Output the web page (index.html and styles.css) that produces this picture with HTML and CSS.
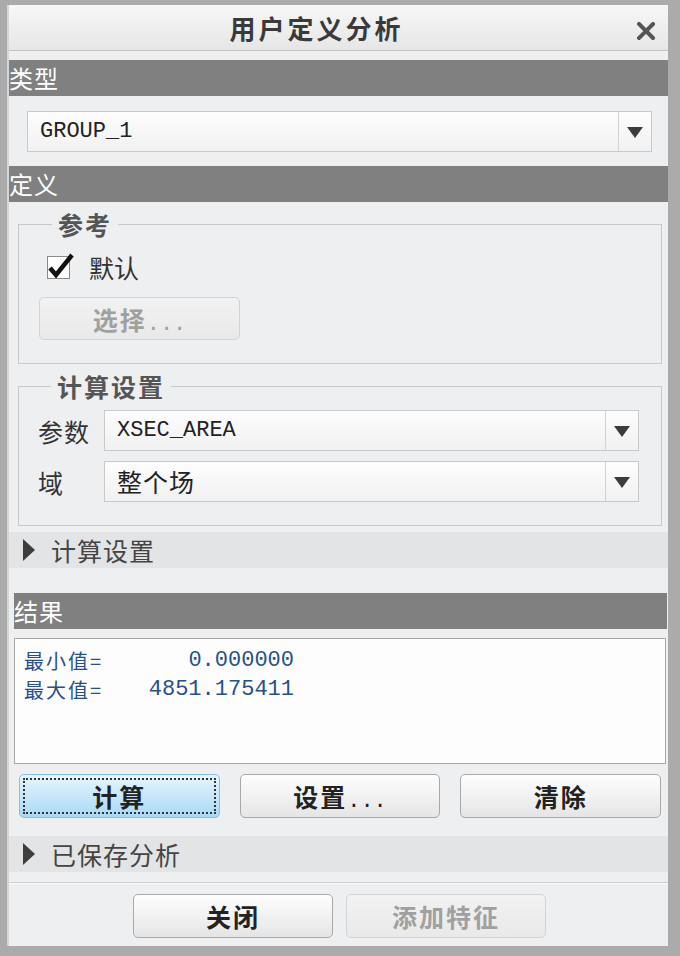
FILE: index.html
```html
<!DOCTYPE html>
<html lang="zh-CN">
<head>
    <meta charset="UTF-8">
    <meta name="viewport" content="width=device-width, initial-scale=1.0">
    <title>用户定义分析</title>
    <link rel="stylesheet" href="styles.css">
</head>
<body>
    <div class="dialog">
        <header class="title-bar">
            <h1>用户定义分析</h1>
            <svg class="close-icon" width="18" height="18" viewBox="0 0 18 18">
                <path d="M2 2 L16 16 M16 2 L2 16" stroke="#555" stroke-width="4" stroke-linecap="square"/>
            </svg>
        </header>

        <div class="section-bar">类型</div>
        <div class="combo combo-type">
            <div class="combo-value mono">GROUP_1</div>
            <div class="combo-arrow"><span class="arrow"></span></div>
        </div>

        <div class="section-bar">定义</div>

        <fieldset class="group group-ref">
            <legend>参考</legend>
            <label class="check-row">
                <svg class="checkbox" width="30" height="30" viewBox="0 0 30 30">
                    <rect x="1.5" y="7.5" width="22" height="22" fill="#fff" stroke="#8a8a8a"/>
                    <path d="M4 19 L10 26 L26 6" fill="none" stroke="#111" stroke-width="4.5"/>
                </svg>
                <span>默认</span>
            </label>
            <button class="btn btn-select" disabled>选择<span class="mono">...</span></button>
        </fieldset>

        <fieldset class="group group-calc">
            <legend>计算设置</legend>
            <div class="field-row">
                <span class="field-label">参数</span>
                <div class="combo">
                    <div class="combo-value mono">XSEC_AREA</div>
                    <div class="combo-arrow"><span class="arrow"></span></div>
                </div>
            </div>
            <div class="field-row">
                <span class="field-label">域</span>
                <div class="combo">
                    <div class="combo-value">整个场</div>
                    <div class="combo-arrow"><span class="arrow"></span></div>
                </div>
            </div>
        </fieldset>

        <div class="expander expander-calc"><span class="tri"></span>计算设置</div>

        <div class="section-bar section-result">结果</div>
        <div class="result-box">
            <div class="result-line"><span>最小值=</span><span class="mono">0.000000</span></div>
            <div class="result-line"><span>最大值=</span><span class="mono">4851.175411</span></div>
        </div>

        <div class="action-row">
            <button class="btn btn-focus">计算</button>
            <button class="btn">设置<span class="mono">...</span></button>
            <button class="btn">清除</button>
        </div>

        <div class="expander expander-saved"><span class="tri"></span>已保存分析</div>

        <footer class="dialog-footer">
            <button class="btn">关闭</button>
            <button class="btn" disabled>添加特征</button>
        </footer>
    </div>
</body>
</html>
```

FILE: styles.css
```css
* {
    margin: 0;
    padding: 0;
    box-sizing: border-box;
}

body {
    background-color: #ababab;
    font-family: "Noto Sans CJK SC", "Liberation Sans", sans-serif;
    color: #333;
}

.mono {
    font-family: "Liberation Mono", "Noto Sans CJK SC", monospace;
}

.dialog {
    margin: 5px 12px 0 7px;
    height: 941px;
    background-color: #eeeff0;
    border-left: 2px solid #d6d6d6;
    display: flex;
    flex-direction: column;
}

.title-bar {
    height: 46px;
    display: flex;
    align-items: center;
    justify-content: center;
    position: relative;
    background: linear-gradient(#f7f7f7, #e6e6e6);
    border-bottom: 1px solid #c4c4c4;
}

.title-bar h1 {
    font-size: 26px;
    font-weight: bold;
    letter-spacing: 3px;
    color: #3a3a3a;
    margin-right: 44px;
}

.close-icon {
    position: absolute;
    right: 13px;
    top: 17px;
}

.section-bar {
    height: 36px;
    margin-top: 9px;
    background-color: #808080;
    color: #fff;
    font-size: 24px;
    line-height: 36px;
    letter-spacing: 1px;
}

.combo {
    display: flex;
    height: 41px;
    border: 1px solid #c9c9c9;
    background: linear-gradient(#fdfdfd, #f1f1f1);
    flex: 1;
}

.combo-type {
    flex: none;
    margin: 15px 16px 14px 18px;
}

.combo-type + .section-bar {
    margin-top: 0;
}

.combo-value {
    flex: 1;
    padding-left: 12px;
    font-size: 22px;
    line-height: 39px;
    color: #222;
}

.combo-value:not(.mono) {
    font-size: 25px;
    letter-spacing: 1px;
}

.combo-arrow {
    width: 33px;
    border-left: 1px solid #d2d2d2;
    display: flex;
    align-items: center;
    justify-content: center;
}

.arrow {
    width: 0;
    height: 0;
    border-left: 8px solid transparent;
    border-right: 8px solid transparent;
    border-top: 11px solid #3c3c3c;
    margin-top: 2px;
}

.group {
    border: 1px solid #c8c8c8;
    margin: 9px 6px 0 9px;
    min-inline-size: 0;
}

.group legend {
    margin-left: 13px;
    padding: 0 6px;
    font-size: 25px;
    font-weight: bold;
    line-height: 26px;
    letter-spacing: 2px;
    color: #555;
}

.group-ref {
    height: 153px;
    padding: 12px 0 0 20px;
}

.check-row {
    display: flex;
    align-items: center;
    gap: 13px;
    font-size: 25px;
    color: #333;
    margin-left: 7px;
}

.checkbox {
    margin-top: -6px;
}

.btn {
    font-family: "Noto Sans CJK SC", "Liberation Sans", sans-serif;
    font-size: 25px;
    font-weight: bold;
    letter-spacing: 2px;
    color: #222;
    height: 44px;
    width: 201px;
    border: 1px solid #a9a9a9;
    border-radius: 5px;
    background: linear-gradient(#fefefe, #e5e5e5);
}

.btn .mono {
    font-weight: normal;
    font-size: 22px;
    letter-spacing: 0;
}

.btn:disabled {
    color: #a0a0a0;
    border-color: #d3d3d3;
    background: linear-gradient(#f2f2f2, #e9e9e9);
}

.btn-select {
    margin-top: 12px;
    height: 43px;
}

.group-calc {
    margin-top: 9px;
    height: 153px;
    padding: 11px 22px 0 19px;
    display: flex;
    flex-direction: column;
    gap: 10px;
}

.field-row {
    display: flex;
    align-items: center;
}

.field-label {
    width: 66px;
    font-size: 25px;
    letter-spacing: 1px;
    color: #333;
}

.expander {
    height: 36px;
    margin-top: 6px;
    background-color: #e3e4e5;
    display: flex;
    align-items: center;
    font-size: 25px;
    letter-spacing: 1px;
    color: #444;
}

.tri {
    width: 0;
    height: 0;
    border-top: 11px solid transparent;
    border-bottom: 11px solid transparent;
    border-left: 12px solid #3d3d3d;
    margin: 0 16px 0 14px;
}

.section-result {
    margin: 25px 1px 0 5px;
}

.result-box {
    margin: 9px 2px 0 5px;
    height: 126px;
    border: 1px solid #a7a7a7;
    background-color: #fdfdfd;
    padding: 7px 0 0 9px;
    color: #27508a;
}

.result-line {
    display: grid;
    grid-template-columns: 123px 147px;
    align-items: center;
    font-size: 20px;
    line-height: 29px;
    letter-spacing: 2px;
}

.result-line .mono {
    font-size: 22px;
    letter-spacing: 0;
    text-align: right;
}

.action-row {
    display: flex;
    gap: 20px;
    margin: 10px 7px 0 10px;
}

.btn-focus {
    background: linear-gradient(#e8f5fd, #a8d9f6);
    border-color: #80c2ec;
    outline: 2px dotted #333;
    outline-offset: -6px;
}

.expander-saved {
    margin-top: 18px;
}

.dialog-footer {
    margin-top: 10px;
    border-top: 1px solid #cdcdcd;
    box-shadow: inset 0 1px 0 #fafafa;
    display: flex;
    justify-content: center;
    gap: 13px;
    padding-top: 11px;
    padding-left: 2px;
}

.dialog-footer .btn {
    width: 200px;
}
```
